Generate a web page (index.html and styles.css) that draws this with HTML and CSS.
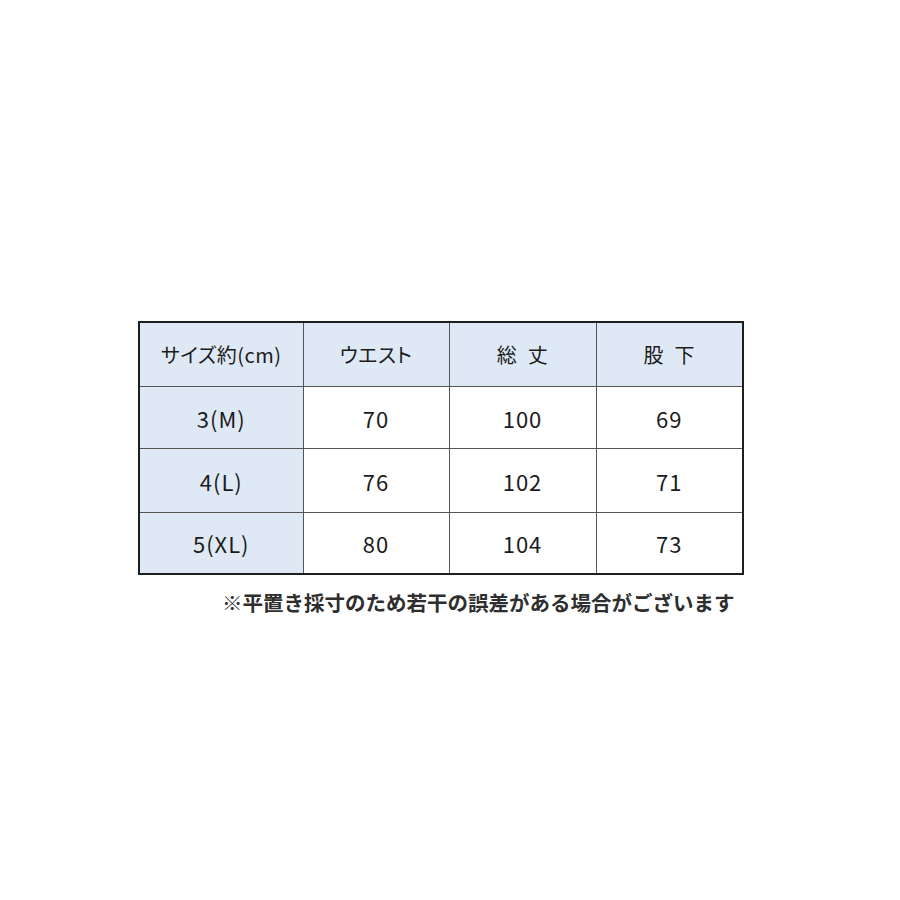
FILE: index.html
```html
<!DOCTYPE html>
<html lang="ja">
<head>
<meta charset="utf-8">
<link rel="stylesheet" href="styles.css">
</head>
<body>
<div class="page">
  <table class="size-table">
    <colgroup>
      <col class="c1"><col class="c2"><col class="c3"><col class="c4">
    </colgroup>
    <thead>
      <tr>
        <th>サイズ約(cm)</th>
        <th>ウエスト</th>
        <th>総&ensp;丈</th>
        <th>股&ensp;下</th>
      </tr>
    </thead>
    <tbody>
      <tr class="r1"><th>3(M)</th><td>70</td><td>100</td><td>69</td></tr>
      <tr class="r2"><th>4(L)</th><td>76</td><td>102</td><td>71</td></tr>
      <tr class="r3"><th>5(XL)</th><td>80</td><td>104</td><td>73</td></tr>
    </tbody>
  </table>
  <p class="note">※平置き採寸のため若干の誤差がある場合がございます</p>
</div>
</body>
</html>
```
FILE: styles.css
```css
html, body {
  margin: 0;
  padding: 0;
  background: #ffffff;
}
body {
  font-family: "Noto Sans CJK JP", "Noto Sans", sans-serif;
  color: #1c1c1c;
}
.page {
  padding-top: 321px;
  padding-left: 138px;
}
.size-table {
  border-collapse: collapse;
  border: 2px solid #1e1e1e;
  width: 606px;
  table-layout: fixed;
}
.c1 { width: 164px; }
.c2 { width: 146px; }
.c3 { width: 147px; }
.c4 { width: 147px; }
.size-table th,
.size-table td {
  border: 1px solid #555;
  text-align: center;
  vertical-align: middle;
  padding: 0;
  font-weight: 400;
  line-height: 1;
}
.size-table thead th {
  background: #dfe9f5;
  height: 63px;
  font-size: 20px;
  font-feature-settings: "palt";
  letter-spacing: 0.5px;
}
.size-table tbody th {
  background: #dfe9f5;
  font-size: 22px;
  letter-spacing: 1px;
}
.size-table tbody td {
  font-size: 22px;
  letter-spacing: 1px;
}
.r1 th, .r1 td { height: 61px; }
.r2 th, .r2 td { height: 63px; }
.r3 th, .r3 td { height: 60px; }
.note {
  margin: 17px 0 0 84px;
  font-size: 20.5px;
  line-height: 1;
  font-weight: 700;
  color: #2e2e2e;
  letter-spacing: 0;
}
```
